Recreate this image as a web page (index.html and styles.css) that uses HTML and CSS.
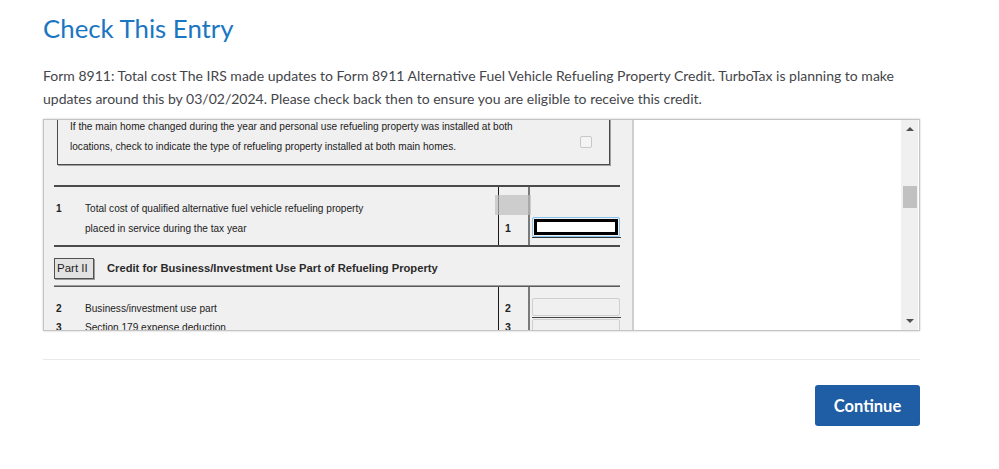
FILE: index.html
```html
<!DOCTYPE html>
<html lang="en">
<head>
<meta charset="utf-8">
<title>Check This Entry</title>
<link rel="stylesheet" href="styles.css">
</head>
<body>
<main class="page">
  <h1 class="title">Check This Entry</h1>
  <p class="intro">Form 8911: Total cost The IRS made updates to Form 8911 Alternative Fuel Vehicle Refueling Property Credit. TurboTax is planning to make updates around this by 03/02/2024. Please check back then to ensure you are eligible to receive this credit.</p>

  <div class="frame">
    <div class="form-pane">
      <div class="form-scroll">
        <div class="home-box">
          <div class="home-text">
            <div>If the main home changed during the year and personal use refueling property was installed at both</div>
            <div>locations, check to indicate the type of refueling property installed at both main homes.</div>
          </div>
          <span class="checkbox"></span>
        </div>

        <div class="rule rule-top"></div>
        <div class="line-row row-1">
          <div class="desc">
            <div class="desc-line"><span class="num">1</span><span>Total cost of qualified alternative fuel vehicle refueling property</span></div>
            <div class="desc-line"><span class="num"></span><span>placed in service during the tax year</span></div>
          </div>
          <div class="ref">
            <span class="shade"></span>
            <span class="ref-num">1</span>
          </div>
          <div class="amt">
            <div class="amt-input focus"><span class="amt-inner"></span></div>
          </div>
        </div>
        <div class="rule"></div>

        <div class="part-row">
          <span class="part-tag">Part II</span>
          <span class="part-title">Credit for Business/Investment Use Part of Refueling Property</span>
        </div>
        <div class="rule rule-light"></div>

        <div class="line-row row-2">
          <div class="desc">
            <div class="desc-line small"><span class="num">2</span><span>Business/investment use part</span></div>
            <div class="desc-line small"><span class="num">3</span><span>Section 179 expense deduction</span></div>
          </div>
          <div class="ref">
            <span class="ref-num r2">2</span>
            <span class="ref-num r3">3</span>
          </div>
          <div class="amt">
            <div class="amt-input plain"></div>
            <div class="amt-input plain"></div>
          </div>
        </div>
      </div>
    </div>
    <div class="side-pane">
      <div class="side-body"></div>
      <div class="scrollbar">
        <span class="arrow up"></span>
        <span class="track"><span class="thumb"></span></span>
        <span class="arrow down"></span>
      </div>
    </div>
  </div>

  <div class="divider"></div>
  <div class="actions">
    <button class="continue" type="button">Continue</button>
  </div>
</main>
</body>
</html>
```

FILE: styles.css
```css
* { box-sizing: border-box; }
html, body { margin: 0; padding: 0; background: #fff; }
body { font-family: Lato, "Open Sans", sans-serif; color: #393a3d; }

.page { padding: 11px 79px 0 43px; }

.title {
  margin: 0;
  font-size: 25.8px;
  line-height: 34px;
  font-weight: 400;
  color: #1a76c2;
}

.intro {
  margin: 19px 0 9px;
  font-size: 14px;
  line-height: 23px;
  color: #44454a;
}

.frame {
  height: 212px;
  display: flex;
  border: 1px solid #c4c4c4;
  box-shadow: 0 0 2px rgba(0,0,0,0.22);
  overflow: hidden;
}

.form-pane {
  width: 588px;
  background: #f0f0f0;
  overflow: hidden;
  font-family: "Liberation Sans", Arial, sans-serif;
  font-size: 10.1px;
  color: #222;
}

.form-scroll { padding-left: 10px; width: 577px; }

.home-box {
  margin: -10px 0 0 3px;
  width: 553px;
  border: 1px solid #4a4a4a;
  box-shadow: 1px 1px 0 #a0a0a0;
  padding: 6px 17px 7px 12px;
  display: flex;
  align-items: center;
  justify-content: space-between;
}
.home-text div { line-height: 20px; }
.checkbox {
  width: 12px; height: 12px;
  border: 1px solid #c8c8c8;
  border-radius: 2px;
  background: #f4f4f4;
  margin-top: 10px;
}

.rule { height: 2px; background: #4b4b4b; width: 566px; }
.rule-top { margin-top: 20px; }
.rule-light { background: linear-gradient(#9a9a9a 50%, #5a5a5a 50%); }

.line-row { display: flex; width: 566px; }
.row-1 { height: 58px; }
.row-2 { height: 60px; }

.desc { width: 445px; padding-top: 12px; }
.row-2 .desc { padding-top: 12px; }
.desc-line { display: flex; line-height: 20px; }
.desc-line.small { line-height: 19px; }
.num { width: 31px; padding-left: 2px; font-weight: 700; }

.ref {
  position: relative;
  width: 32px;
  border-left: 1px solid #1a1a1a;
  border-right: 2px solid #7a7a7a;
  font-weight: 700;
}
.shade {
  position: absolute;
  left: -4px; top: 8px;
  width: 36px; height: 20px;
  background: rgba(190,190,190,0.7);
}
.ref-num { position: absolute; left: 6px; font-size: 10.5px; }
.row-1 .ref-num { top: 35px; }
.r2 { top: 15px; }
.r3 { top: 34px; }

.amt { flex: 1; padding-left: 2px; }
.row-1 .amt { padding-top: 30px; }
.amt-input { width: 88px; }
.focus {
  height: 20px;
  border: 1px solid #86c3ef;
  border-radius: 2px;
  padding: 1px;
  position: relative;
}
.amt-inner {
  display: block;
  height: 16px;
  border: 3px solid #000;
  background: #fff;
}
.focus::after {
  content: "";
  position: absolute;
  left: -1px; right: -2px; bottom: -2px;
  height: 1px;
  background: #333;
}
.row-2 .amt { padding-top: 11px; }
.plain {
  height: 18px;
  border: 1px solid #cfcfcf;
  border-radius: 2px;
  background: #f0f0f0;
  margin-bottom: 3px;
  position: relative;
}
.plain:first-child::after {
  content: "";
  position: absolute;
  left: -1px; right: -2px; bottom: -3px;
  height: 1px;
  background: #444;
}

.part-row {
  height: 38px;
  display: flex;
  align-items: center;
  padding-top: 4px;
}
.part-tag {
  width: 40px; height: 21px;
  border: 1px solid #505050;
  box-shadow: 1px 1px 0 #9a9a9a;
  background: #e2e2e2;
  font-size: 11.5px;
  line-height: 19px;
  padding-left: 2px;
  color: #222;
}
.part-title {
  margin-left: 13px;
  font-size: 11.2px;
  font-weight: 700;
  color: #2a2a2a;
}

.side-pane {
  flex: 1;
  display: flex;
  background: #fff;
  border-left: 2px solid #cfcfcf;
}
.side-body { flex: 1; }
.scrollbar {
  width: 17px;
  margin-right: 1px;
  background: #f0f0f0;
  display: flex;
  flex-direction: column;
  align-items: center;
}
.arrow { width: 0; height: 0; border-left: 4px solid transparent; border-right: 4px solid transparent; }
.arrow.up { border-bottom: 4px solid #505050; margin-top: 7px; }
.arrow.down { border-top: 4px solid #505050; margin-bottom: 7px; }
.track { flex: 1; width: 100%; padding-top: 55px; }
.thumb { display: block; margin-left: 2px; width: 14px; height: 22px; background: #c1c1c1; }

.divider { height: 1px; background: #e8e8e8; margin-top: 28px; }

.actions { display: flex; justify-content: flex-end; padding-top: 25px; }
.continue {
  width: 105px; height: 41px;
  border: 0;
  border-radius: 3px;
  background: #1f5da4;
  color: #fff;
  font-family: Lato, "Open Sans", sans-serif;
  font-size: 16.5px;
  font-weight: 700;
  cursor: pointer;
}
```
